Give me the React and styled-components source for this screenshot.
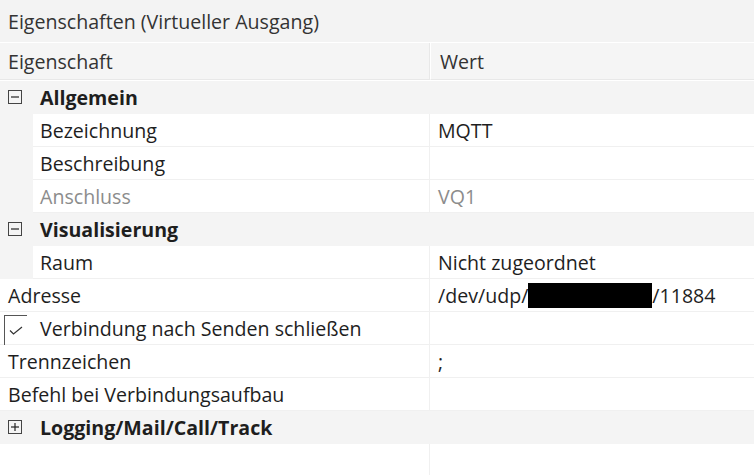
import React from "react";
import styled, { createGlobalStyle } from "styled-components";

const Global = createGlobalStyle`
  html, body { margin: 0; padding: 0; background: #ffffff; }
  body { font-family: "Open Sans", "Noto Sans", sans-serif; }
`;

const Page = styled.div`
  width: 754px;
  height: 475px;
  overflow: hidden;
  background: #ffffff;
  display: flex;
  flex-direction: column;
  font-family: "Open Sans", "Noto Sans", sans-serif;
  font-size: 19.6px;
  color: #1e1e1e;
`;

const TitleBar = styled.div`
  height: 42px;
  flex: none;
  background: #f3f3f3;
  display: flex;
  align-items: center;
  padding-left: 8px;
  color: #333333;
  border-bottom: 1px solid #ffffff;
`;

const Table = styled.div`
  display: grid;
  grid-template-columns: 430px 1fr;
  grid-template-rows: 38px;
  grid-auto-rows: 33px;
  flex: 1;
  align-content: start;
`;

const HeadCell = styled.div`
  height: 37px;
  background: #f5f5f5;
  border-bottom: 1px solid #e8e8e8;
  display: flex;
  align-items: center;
  padding-left: ${(p) => (p.$value ? "9px" : "8px")};
  color: #333333;
  ${(p) => (p.$value ? "border-left: 1px solid #ffffff;" : "border-right: 1px solid #e8e8e8;")}
  box-sizing: border-box;
`;

const NameCell = styled.div`
  display: flex;
  align-items: stretch;
  background: ${(p) => (p.$group ? "#f4f4f4" : "#ffffff")};
  box-sizing: border-box;
  border-right: ${(p) => (p.$group ? "1px solid #f4f4f4" : "1px solid #f0f0f0")};
`;

const Indent = styled.div`
  width: ${(p) => p.$w}px;
  flex: none;
  background: #f4f4f4;
`;

const NameText = styled.div`
  flex: 1;
  display: flex;
  align-items: center;
  gap: ${(p) => p.$gap || 0}px;
  padding-left: ${(p) => p.$pad}px;
  font-weight: ${(p) => (p.$bold ? 700 : 400)};
  color: ${(p) => (p.$muted ? "#8c8c8c" : "#1e1e1e")};
  border-bottom: 1px solid ${(p) => (p.$group ? "#f4f4f4" : "#f0f0f0")};
  white-space: nowrap;
`;

const ValueCell = styled.div`
  display: flex;
  align-items: center;
  padding-left: 8px;
  background: ${(p) => (p.$group ? "#f4f4f4" : "#ffffff")};
  color: ${(p) => (p.$muted ? "#8c8c8c" : "#1e1e1e")};
  border-bottom: 1px solid ${(p) => (p.$group ? "#f4f4f4" : "#f0f0f0")};
  white-space: nowrap;
`;

const Filler = styled.div`
  height: 31px;
  background: #ffffff;
  border-right: ${(p) => (p.$left ? "1px solid #f0f0f0" : "none")};
  box-sizing: border-box;
`;

const AddressText = styled.span`
  display: inline-flex;
  align-items: center;
`;

const Redacted = styled.span`
  display: inline-block;
  width: 124px;
  height: 25px;
  background: #000000;
`;

const CheckBox = styled.span`
  width: 23px;
  height: 30px;
  margin-right: 13px;
  margin-top: 3px;
  box-sizing: border-box;
  border-left: 1px solid #555555;
  border-top: 1px solid #555555;
  display: inline-flex;
  justify-content: center;
  padding-top: 10px;
  flex: none;
  align-self: flex-start;
`;

function ToggleIcon({ open }) {
  return (
    <svg width="14" height="14" viewBox="0 0 14 14" style={{ flex: "none" }}>
      <rect x="0.5" y="0.5" width="13" height="13" fill="none" stroke="#444" strokeWidth="1" />
      <line x1="3" y1="7" x2="11" y2="7" stroke="#222" strokeWidth="1.2" />
      {!open && <line x1="7" y1="3" x2="7" y2="11" stroke="#222" strokeWidth="1.2" />}
    </svg>
  );
}

function CheckMark() {
  return (
    <svg width="14" height="9" viewBox="0 0 14 9">
      <polyline points="1,4.5 4.5,8 13,1" fill="none" stroke="#333" strokeWidth="1.2" />
    </svg>
  );
}

const rows = [
  { type: "group", name: "Allgemein", open: true },
  { type: "item", name: "Bezeichnung", value: "MQTT" },
  { type: "item", name: "Beschreibung", value: "" },
  { type: "item", name: "Anschluss", value: "VQ1", muted: true },
  { type: "group", name: "Visualisierung", open: true },
  { type: "item", name: "Raum", value: "Nicht zugeordnet" },
  { type: "top", name: "Adresse", value: "address" },
  { type: "check", name: "Verbindung nach Senden schließen", value: "" },
  { type: "top", name: "Trennzeichen", value: ";" },
  { type: "top", name: "Befehl bei Verbindungsaufbau", value: "" },
  { type: "group", name: "Logging/Mail/Call/Track", open: false },
];

function Row({ r }) {
  if (r.type === "group") {
    return (
      <>
        <NameCell $group>
          <NameText $group $bold $pad={8} $gap={18}>
            <ToggleIcon open={r.open} />
            {r.name}
          </NameText>
        </NameCell>
        <ValueCell $group />
      </>
    );
  }
  const value =
    r.value === "address" ? (
      <AddressText>
        /dev/udp/<Redacted />/11884
      </AddressText>
    ) : (
      r.value
    );
  if (r.type === "item") {
    return (
      <>
        <NameCell>
          <Indent $w={33} />
          <NameText $pad={7} $muted={r.muted}>
            {r.name}
          </NameText>
        </NameCell>
        <ValueCell $muted={r.muted}>{value}</ValueCell>
      </>
    );
  }
  if (r.type === "check") {
    return (
      <>
        <NameCell>
          <NameText $pad={4}>
            <CheckBox>
              <CheckMark />
            </CheckBox>
            {r.name}
          </NameText>
        </NameCell>
        <ValueCell>{value}</ValueCell>
      </>
    );
  }
  return (
    <>
      <NameCell>
        <NameText $pad={8}>{r.name}</NameText>
      </NameCell>
      <ValueCell>{value}</ValueCell>
    </>
  );
}

export default function App() {
  return (
    <>
      <Global />
      <Page>
        <TitleBar>Eigenschaften (Virtueller Ausgang)</TitleBar>
        <Table>
          <HeadCell>Eigenschaft</HeadCell>
          <HeadCell $value>Wert</HeadCell>
          {rows.map((r, i) => (
            <Row key={i} r={r} />
          ))}
          <Filler $left />
          <Filler />
        </Table>
      </Page>
    </>
  );
}
